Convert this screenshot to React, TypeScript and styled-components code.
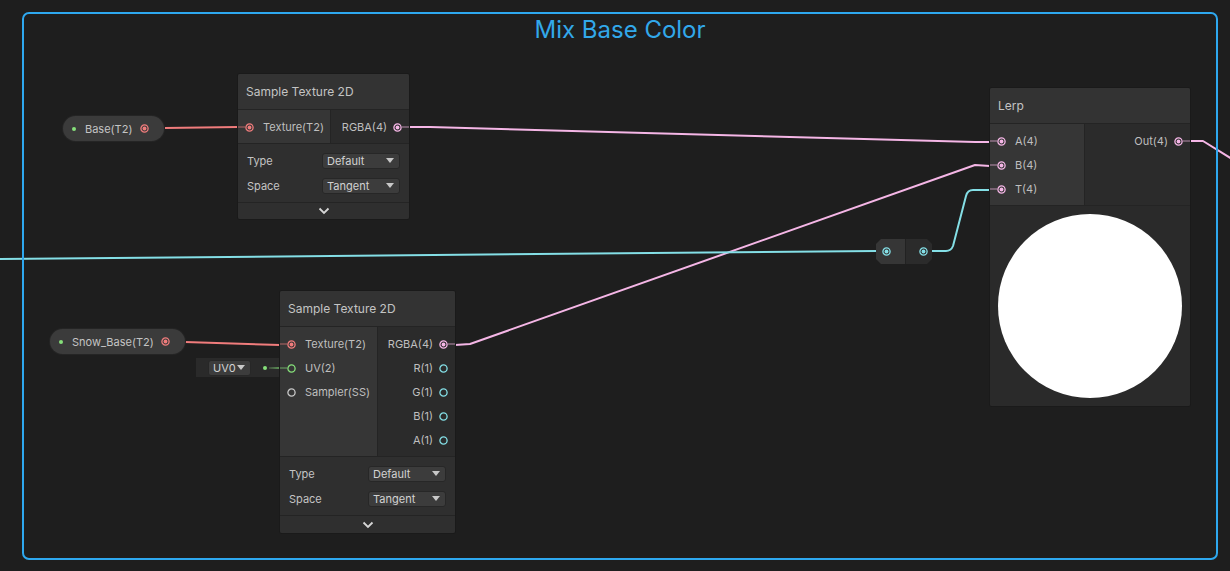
import React from 'react';
import styled, { createGlobalStyle } from 'styled-components';

const RED = '#f07c7c';
const PINK = '#f5b6e6';
const CYAN = '#84dfe6';
const GREEN = '#86e07a';
const GREY = '#c8c8c8';

const GlobalStyle = createGlobalStyle`
  html, body {
    margin: 0;
    padding: 0;
    background: #1e1e1e;
  }
  body {
    font-family: Inter, "Noto Sans", "Liberation Sans", sans-serif;
    -webkit-font-smoothing: antialiased;
  }
`;

const Canvas = styled.div`
  position: relative;
  width: 1230px;
  height: 571px;
  overflow: hidden;
  background: #1e1e1e;
`;

const WireLayer = styled.svg`
  position: absolute;
  left: 0;
  top: 0;
  pointer-events: none;
`;

const Group = styled.div`
  position: absolute;
  left: 22px;
  top: 12px;
  width: 1192px;
  height: 544px;
  border: 2px solid #2ea8ef;
  border-radius: 7px;
`;

const GroupTitle = styled.div`
  padding-top: 2px;
  text-align: center;
  font-size: 24px;
  line-height: 28px;
  color: #32a8ea;
`;

const Node = styled.div<{ $x: number; $y: number; $w: number }>`
  position: absolute;
  left: ${p => p.$x}px;
  top: ${p => p.$y}px;
  width: ${p => p.$w}px;
  display: flex;
  flex-direction: column;
  background: #2e2e2e;
  box-shadow: 0 0 0 1px #1a1a1a;
  border-radius: 2px;
  overflow: hidden;
`;

const Header = styled.div`
  height: 35px;
  display: flex;
  align-items: center;
  padding-left: 8px;
  background: #333333;
  border-bottom: 1px solid #242424;
  font-size: 12px;
  color: #c4c4c4;
`;

const Ports = styled.div`
  display: flex;
  border-bottom: 1px solid #242424;
`;

const Inputs = styled.div<{ $w: number }>`
  width: ${p => p.$w}px;
  padding: 5px 0 4px;
  background: #363636;
  border-right: 1px solid #242424;
`;

const Outputs = styled.div`
  flex: 1;
  padding: 5px 0 4px;
  background: #2b2b2b;
  display: flex;
  flex-direction: column;
  align-items: flex-end;
`;

const PortRow = styled.div<{ $out?: boolean }>`
  height: 24px;
  display: flex;
  flex-direction: ${p => (p.$out ? 'row-reverse' : 'row')};
  align-items: center;
  font-size: 11px;
  color: #bfbfbf;
`;

const Stub = styled.div<{ $c: string; $w: number }>`
  width: ${p => p.$w}px;
  height: 2px;
  background: ${p => p.$c};
  opacity: 0.35;
  flex: none;
`;

const Spacer = styled.div<{ $w: number }>`
  width: ${p => p.$w}px;
  flex: none;
`;

const PortLabel = styled.span<{ $out?: boolean }>`
  margin: ${p => (p.$out ? '0 6px 0 0' : '0 0 0 9px')};
  white-space: nowrap;
`;

const Settings = styled.div`
  padding: 4px 9px;
  background: #2f2f2f;
  border-bottom: 1px solid #242424;
`;

const SettingRow = styled.div`
  height: 25px;
  display: flex;
  align-items: center;
  justify-content: space-between;
  font-size: 11px;
  color: #c4c4c4;
`;

const Dropdown = styled.div<{ $w: number }>`
  width: ${p => p.$w}px;
  height: 16px;
  box-sizing: border-box;
  padding: 0 5px 0 4px;
  display: flex;
  align-items: center;
  justify-content: space-between;
  background: #3c3c3c;
  border: 1px solid #272727;
  border-radius: 3px;
  font-size: 11px;
  color: #d2d2d2;
`;

const Collapse = styled.div<{ $h: number }>`
  height: ${p => p.$h}px;
  display: flex;
  align-items: center;
  justify-content: center;
  background: #2f2f2f;
`;

const Preview = styled.div`
  height: 200px;
  display: flex;
  align-items: center;
  justify-content: center;
  background: #2a2a2a;
`;

const WhiteDisc = styled.div`
  width: 184px;
  height: 184px;
  border-radius: 50%;
  background: #ffffff;
`;

const Pill = styled.div<{ $x: number; $y: number; $w: number }>`
  position: absolute;
  left: ${p => p.$x}px;
  top: ${p => p.$y}px;
  width: ${p => p.$w}px;
  height: 25px;
  box-sizing: border-box;
  padding: 0 15px 0 9px;
  display: flex;
  align-items: center;
  background: #3b3b3b;
  border-radius: 13px;
  box-shadow: 0 0 0 1px #252525;
  font-size: 11px;
  color: #c4c4c4;
`;

const PillLabel = styled.span`
  flex: 1;
  margin-left: 9px;
  white-space: nowrap;
`;

const Dot = styled.div<{ $c: string }>`
  width: 4px;
  height: 4px;
  border-radius: 50%;
  background: ${p => p.$c};
  flex: none;
`;

const InlineValue = styled.div`
  position: absolute;
  left: 196px;
  top: 358px;
  width: 84px;
  height: 19px;
  box-sizing: border-box;
  padding-left: 12px;
  display: flex;
  align-items: center;
  background: #2a2a2a;
`;

const InlineStub = styled.div`
  margin-left: 12px;
  flex: 1;
  display: flex;
  align-items: center;
`;

const InlineLine = styled.div`
  flex: 1;
  height: 2px;
  margin-left: 2px;
  background: linear-gradient(to right, #3f4a3d, #5f9a58);
`;

const Reroute = styled.div`
  position: absolute;
  left: 876px;
  top: 239px;
  width: 56px;
  height: 25px;
  display: flex;
  clip-path: polygon(5px 0, 51px 0, 56px 5px, 56px 20px, 51px 25px, 5px 25px, 0 20px, 0 5px);
`;

const RerouteHalf = styled.div<{ $dark?: boolean }>`
  flex: 1;
  display: flex;
  align-items: center;
  justify-content: ${p => (p.$dark ? 'flex-end' : 'flex-start')};
  padding: ${p => (p.$dark ? '0 4px 0 0' : '0 0 0 6px')};
  background: ${p => (p.$dark ? '#2b2b2b' : '#363636')};
  border-left: ${p => (p.$dark ? '1px solid #222' : 'none')};
`;

const PortDot = ({ color, filled = true }: { color: string; filled?: boolean }) => (
  <svg width="9" height="9" viewBox="0 0 9 9" style={{ flex: 'none' }}>
    <circle cx="4.5" cy="4.5" r="3.6" fill="none" stroke={color} strokeWidth="1.3" />
    {filled && <circle cx="4.5" cy="4.5" r="1.9" fill={color} />}
  </svg>
);

const Caret = () => (
  <svg width="8" height="5" viewBox="0 0 8 5">
    <path d="M0 0 L8 0 L4 5 Z" fill="#c8c8c8" />
  </svg>
);

const Chevron = () => (
  <svg width="12" height="8" viewBox="0 0 12 8">
    <path d="M1.5 1.5 L6 6 L10.5 1.5" fill="none" stroke="#d6d6d6" strokeWidth="1.8" />
  </svg>
);

type PortProps = { label: string; color: string; filled?: boolean; wired?: boolean; out?: boolean };

const Port = ({ label, color, filled = true, wired = false, out = false }: PortProps) => (
  <PortRow $out={out}>
    {wired ? <Stub $c={color} $w={7} /> : <Spacer $w={7} />}
    <PortDot color={color} filled={filled} />
    <PortLabel $out={out}>{label}</PortLabel>
  </PortRow>
);

const Setting = ({ label, value }: { label: string; value: string }) => (
  <SettingRow>
    <span>{label}</span>
    <Dropdown $w={78}>
      {value}
      <Caret />
    </Dropdown>
  </SettingRow>
);

const Wires = () => (
  <WireLayer width="1230" height="571">
    <g fill="none" strokeWidth="2" strokeLinejoin="round">
      <path d="M165 128 L238 127" stroke={RED} />
      <path d="M185 342 L280 345" stroke={RED} />
      <path d="M409 127 L430 127 L975 142 L990 142" stroke={PINK} />
      <path d="M455 345 L470 344 L975 165 L990 166" stroke={PINK} />
      <path d="M0 259 L876 251" stroke={CYAN} />
      <path d="M931 251 L946 251 Q951 251 953 246 L966 196 Q967.5 190 973 190 L990 190" stroke={CYAN} />
      <path d="M1190 141 L1203 141 L1232 159" stroke={PINK} />
    </g>
  </WireLayer>
);

export default function App() {
  return (
    <Canvas>
      <GlobalStyle />
      <Wires />
      <Group>
        <GroupTitle>Mix Base Color</GroupTitle>
      </Group>

      <Pill $x={63} $y={116} $w={101}>
        <Dot $c={GREEN} />
        <PillLabel>Base(T2)</PillLabel>
        <PortDot color={RED} />
      </Pill>

      <Node $x={238} $y={74} $w={171}>
        <Header>Sample Texture 2D</Header>
        <Ports>
          <Inputs $w={92}>
            <Port label="Texture(T2)" color={RED} wired />
          </Inputs>
          <Outputs>
            <Port label="RGBA(4)" color={PINK} wired out />
          </Outputs>
        </Ports>
        <Settings>
          <Setting label="Type" value="Default" />
          <Setting label="Space" value="Tangent" />
        </Settings>
        <Collapse $h={16}>
          <Chevron />
        </Collapse>
      </Node>

      <Pill $x={50} $y={329} $w={135}>
        <Dot $c={GREEN} />
        <PillLabel>Snow_Base(T2)</PillLabel>
        <PortDot color={RED} />
      </Pill>

      <InlineValue>
        <Dropdown $w={43}>
          UV0
          <Caret />
        </Dropdown>
        <InlineStub>
          <Dot $c={GREEN} />
          <InlineLine />
        </InlineStub>
      </InlineValue>

      <Node $x={280} $y={291} $w={175}>
        <Header>Sample Texture 2D</Header>
        <Ports>
          <Inputs $w={97}>
            <Port label="Texture(T2)" color={RED} wired />
            <Port label="UV(2)" color={GREEN} filled={false} wired />
            <Port label="Sampler(SS)" color={GREY} filled={false} />
          </Inputs>
          <Outputs>
            <Port label="RGBA(4)" color={PINK} wired out />
            <Port label="R(1)" color={CYAN} filled={false} out />
            <Port label="G(1)" color={CYAN} filled={false} out />
            <Port label="B(1)" color={CYAN} filled={false} out />
            <Port label="A(1)" color={CYAN} filled={false} out />
          </Outputs>
        </Ports>
        <Settings>
          <Setting label="Type" value="Default" />
          <Setting label="Space" value="Tangent" />
        </Settings>
        <Collapse $h={17}>
          <Chevron />
        </Collapse>
      </Node>

      <Reroute>
        <RerouteHalf>
          <PortDot color={CYAN} />
        </RerouteHalf>
        <RerouteHalf $dark>
          <PortDot color={CYAN} />
        </RerouteHalf>
      </Reroute>

      <Node $x={990} $y={88} $w={200}>
        <Header>Lerp</Header>
        <Ports>
          <Inputs $w={94}>
            <Port label="A(4)" color={PINK} wired />
            <Port label="B(4)" color={PINK} wired />
            <Port label="T(4)" color={PINK} wired />
          </Inputs>
          <Outputs>
            <Port label="Out(4)" color={PINK} wired out />
          </Outputs>
        </Ports>
        <Preview>
          <WhiteDisc />
        </Preview>
      </Node>
    </Canvas>
  );
}
